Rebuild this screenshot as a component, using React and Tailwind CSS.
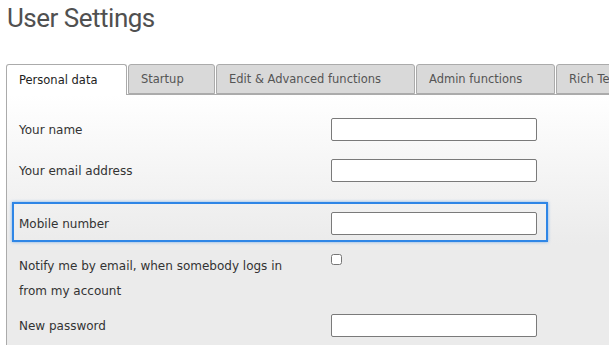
import { useState } from "react";

const tabs = [
  { label: "Personal data", w: "w-[121px]" },
  { label: "Startup", w: "w-[87px]" },
  { label: "Edit & Advanced functions", w: "w-[199px]" },
  { label: "Admin functions", w: "w-[139px]" },
  { label: "Rich Text Editor", w: "w-[140px]" },
];

function Field({ label, highlight, children }) {
  return (
    <div
      className={
        "ml-[5px] w-[536px] grid grid-cols-[312px_206px] items-center border-2 pl-[5px] " +
        (highlight
          ? "border-[#2f86e6] shadow-[0_0_3px_rgba(47,134,230,0.6)] pt-[8px] pb-[5px]"
          : "border-transparent")
      }
    >
      {label}
      {children}
    </div>
  );
}

function TextInput() {
  return (
    <input
      type="text"
      className="h-[23px] w-[206px] rounded-[2px] border border-[#7a7a7a] bg-white px-1 text-[12px] outline-none"
    />
  );
}

export default function App() {
  const [active, setActive] = useState(0);
  const [notify, setNotify] = useState(false);

  return (
    <div className="h-[345px] w-[609px] overflow-hidden bg-white font-['DejaVu_Sans',Verdana,sans-serif] text-[12px] text-[#333]">
      <h1 className="pl-[7px] pt-[1px] font-['Roboto',sans-serif] text-[26px] tracking-[-0.5px] leading-[34px] text-[#505050]">
        User Settings
      </h1>

      <div className="mt-[29px] flex gap-[1px] pl-[6px] whitespace-nowrap">
        {tabs.map((t, i) => (
          <button
            key={t.label}
            onClick={() => setActive(i)}
            className={
              "h-[30px] shrink-0 overflow-hidden rounded-t-[3px] border border-[#ababab] pl-[12px] text-left text-[11.5px] leading-[28px] " +
              t.w +
              (i === active
                ? " -mb-px h-[31px] border-b-0 bg-white text-[#222]"
                : " bg-[#d9d9d9] text-[#555]")
            }
          >
            {t.label}
          </button>
        ))}
      </div>

      <div className="ml-[6px] h-[260px] border-l border-t border-[#ababab] bg-[linear-gradient(#ffffff,#ebebeb_150px)] pt-[21px]">
        <Field label={<span>Your name</span>}>
          <TextInput />
        </Field>
        <div className="h-[14px]" />
        <Field label={<span>Your email address</span>}>
          <TextInput />
        </Field>
        <div className="h-[18px]" />
        <Field highlight label={<span>Mobile number</span>}>
          <TextInput />
        </Field>
        <div className="h-[9px]" />
        <Field
          label={
            <span className="block whitespace-nowrap leading-[25px] pt-[1px]">
              Notify me by email, when somebody logs in
              <br />
              from my account
            </span>
          }
        >
          <label className="self-start pt-[1px]">
            <input
              type="checkbox"
              checked={notify}
              onChange={(e) => setNotify(e.target.checked)}
              className="m-0 h-[11px] w-[11px] align-top"
            />
          </label>
        </Field>
        <div className="h-[6px]" />
        <Field label={<span>New password</span>}>
          <TextInput />
        </Field>
      </div>
    </div>
  );
}
